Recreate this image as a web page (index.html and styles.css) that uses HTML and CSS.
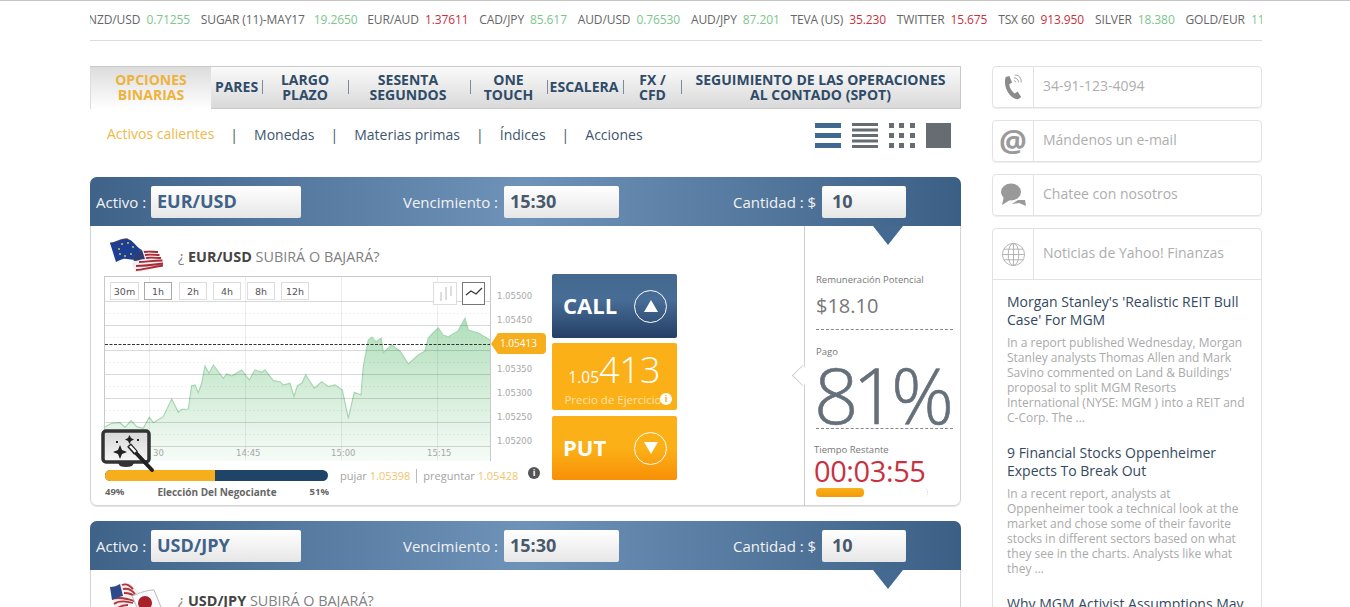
FILE: index.html
```html
<!DOCTYPE html>
<html lang="es">
<head>
<meta charset="utf-8">
<title>Opciones binarias</title>
<link rel="stylesheet" href="styles.css">
</head>
<body>
<div class="page">
  <div class="ticker">
    <div class="ticker-track">
      <span class="tick">NZD/USD <b class="up">0.71255</b></span>
      <span class="tick tick-wide">SUGAR (11)-MAY17 <b class="up">19.2650</b></span>
      <span class="tick">EUR/AUD <b class="down">1.37611</b></span>
      <span class="tick">CAD/JPY <b class="up">85.617</b></span>
      <span class="tick">AUD/USD <b class="up">0.76530</b></span>
      <span class="tick">AUD/JPY <b class="up">87.201</b></span>
      <span class="tick">TEVA (US) <b class="down">35.230</b></span>
      <span class="tick">TWITTER <b class="down">15.675</b></span>
      <span class="tick">TSX 60 <b class="down">913.950</b></span>
      <span class="tick">SILVER <b class="up">18.380</b></span>
      <span class="tick">GOLD/EUR <b class="up">1161.50</b></span>
    </div>
  </div>

  <div class="columns">
    <main class="main">
      <nav class="tabs">
        <a class="tab tab-active">OPCIONES<br>BINARIAS</a>
        <a class="tab tab-pares sep">PARES</a>
        <a class="tab tab-largo sep">LARGO<br>PLAZO</a>
        <a class="tab tab-sesenta sep">SESENTA<br>SEGUNDOS</a>
        <a class="tab tab-one sep">ONE<br>TOUCH</a>
        <a class="tab tab-esc sep">ESCALERA</a>
        <a class="tab tab-fx sep">FX /<br>CFD</a>
        <a class="tab tab-seg">SEGUIMIENTO DE LAS OPERACIONES<br>AL CONTADO (SPOT)</a>
      </nav>

      <div class="subnav">
        <a class="sub sub-active">Activos calientes</a><i class="bar">|</i>
        <a class="sub">Monedas</a><i class="bar">|</i>
        <a class="sub">Materias primas</a><i class="bar">|</i>
        <a class="sub">Índices</a><i class="bar">|</i>
        <a class="sub">Acciones</a>
        <div class="views">
          <svg class="view" viewBox="0 0 26 26"><path fill="#41688f" d="M0 1h26v5H0zM0 11h26v5H0zM0 21h26v5H0z"/></svg>
          <svg class="view" viewBox="0 0 26 26"><path fill="#666c72" d="M0 1h26v3H0zM0 6.500h26v3H0zM0 12h26v3H0zM0 17.500h26v3H0zM0 23h26v3H0z"/></svg>
          <svg class="view" viewBox="0 0 26 26"><path fill="#666c72" d="M0 1h5v5H0zM10 1h5v5h-5zM21 1h5v5h-5zM0 11h5v5H0zM10 11h5v5h-5zM21 11h5v5h-5zM0 21h5v5H0zM10 21h5v5h-5zM21 21h5v5h-5z"/></svg>
          <svg class="view" viewBox="0 0 26 26"><path fill="#666c72" d="M0 1h25v25H0z"/></svg>
        </div>
      </div>

      <section class="card">
        <header class="card-head">
          <label class="lbl lbl-asset">Activo :</label><span class="field field-asset">EUR/USD</span>
          <label class="lbl lbl-exp">Vencimiento :</label><span class="field field-exp">15:30</span>
          <label class="lbl lbl-amt">Cantidad : $</label><span class="field field-amt">10</span>
          <span class="notch"></span>
        </header>
        <div class="card-body">
          <div class="chart-col">
            <div class="question">
              <svg class="flag" viewBox="0 0 56 36">
                <path fill="#1d3f93" d="M2 7C8 7 13 2 20 3c5 1 8 8 14 11l-4 9c-6 2-11-1-15 0-3 1-5 2-7 3z"/>
                <g fill="#d9c34a"><circle cx="14" cy="8" r="1"/><circle cx="20" cy="7" r="1"/><circle cx="25" cy="11" r="1"/><circle cx="11" cy="13" r="1"/><circle cx="12" cy="18" r="1"/><circle cx="17" cy="20" r="1"/><circle cx="23" cy="18" r="1"/></g>
                <path fill="#f3eeee" d="M26 20c3-1 5-6 9-6 5-1 9 1 14 0l7 15c-5 2-9 3-15 5-5 1-9 2-14 2l-3-8c2-2 1-6 2-8z"/>
                <path fill="none" stroke="#a92d38" stroke-width="1.800" d="M36 16c5-1 9 0 14 0M37 19c5-1 10 0 14.500 0M38 22c5-1 10 0 15 0M31 26c6 0 11-1 23.500-1.500M28 30c5 0 16-1 27-2.500M28 34c5 0 16-3 27-4.500"/>
                <path fill="#2c3f73" d="M24 21c3-1 6-6 10-7l3 9c-4 0-7 2-11 2z"/>
                <path fill="none" stroke="#4b3a3a" stroke-width=".8" d="M2 7C8 7 13 2 20 3"/>
              </svg>
              <span class="q-text">¿ <b>EUR/USD</b> SUBIRÁ O BAJARÁ?</span>
            </div>
            <svg class="chart" viewBox="104 276 442 190">
              <defs>
                <linearGradient id="area" x1="0" y1="0" x2="0" y2="1">
                  <stop offset="0" stop-color="#b0dfba"/>
                  <stop offset="1" stop-color="#f6fbf7"/>
                </linearGradient>
              </defs>
              <rect x="104.500" y="276.500" width="386" height="184" fill="#fff" stroke="#c9c9c9"/>
              <path fill="url(#area)" d="M105 461V426.700L111.700 423.300 120 422.700 125 427.300 131 420.700 136.700 426.700 143.300 428.300 149.300 417.300 153.300 422.700 163.300 416.700 171.700 399 178.300 412.300 181.700 409.300 188.300 409 191.700 385.700 195 385 198.300 392.700 201.700 383.300 205 366 209 373.300 213.300 365 223.300 378.300 226.700 374 231.700 376 241.700 370 249.300 380 255 370 261.700 372.300 265 370 273.300 380.700 280 381.700 283.300 385 290 383.300 294 396.700 297.300 386 302 383 305.700 375 314.300 388.300 321.700 381.700 328.300 386.700 335 385 342.300 390 348.300 418.300 354.300 392.300 361 395 363.300 366.700 368.300 340 372 337 376 342 381 338 383.300 352.700 391.700 345 400 351 408.300 364 418.300 355 425 351 428.300 338 433 333 438.300 328 443 335 448.300 336.700 458 331 465 318.300 468.300 330 478.300 333 490 340V461Z"/>
              <path fill="none" stroke="#a6d6b1" stroke-width="1.200" d="M105 426.700L111.700 423.300 120 422.700 125 427.300 131 420.700 136.700 426.700 143.300 428.300 149.300 417.300 153.300 422.700 163.300 416.700 171.700 399 178.300 412.300 181.700 409.300 188.300 409 191.700 385.700 195 385 198.300 392.700 201.700 383.300 205 366 209 373.300 213.300 365 223.300 378.300 226.700 374 231.700 376 241.700 370 249.300 380 255 370 261.700 372.300 265 370 273.300 380.700 280 381.700 283.300 385 290 383.300 294 396.700 297.300 386 302 383 305.700 375 314.300 388.300 321.700 381.700 328.300 386.700 335 385 342.300 390 348.300 418.300 354.300 392.300 361 395 363.300 366.700 368.300 340 372 337 376 342 381 338 383.300 352.700 391.700 345 400 351 408.300 364 418.300 355 425 351 428.300 338 433 333 438.300 328 443 335 448.300 336.700 458 331 465 318.300 468.300 330 478.300 333 490 340"/>
              <path fill="none" stroke="#000" stroke-opacity=".15" d="M105 301.500h385M105 325.500h385M105 350.500h385M105 374.500h385M105 398.500h385M105 422.500h385M105 446.500h385"/>
              <path fill="none" stroke="#000" stroke-opacity=".05" stroke-dasharray="2 2" d="M105 313.500h385M105 337.500h385M105 362.500h385M105 386.500h385M105 410.500h385M105 434.500h385"/>
              <path fill="none" stroke="#000" stroke-opacity=".07" d="M149.500 277v183M245.500 277v183M341.500 277v183M437.500 277v183"/>
              <path fill="none" stroke="#333" stroke-dasharray="3 1.500" d="M105 344.500h385"/>
              <g class="axis">
                <text x="497" y="299">1.05500</text><text x="497" y="323">1.05450</text>
                <text x="497" y="372">1.05350</text><text x="497" y="396">1.05300</text>
                <text x="497" y="420">1.05250</text><text x="497" y="444">1.05200</text>
                <text x="153" y="456">30</text><text x="236" y="456">14:45</text>
                <text x="331" y="456">15:00</text><text x="427" y="456">15:15</text>
              </g>
              <path fill="#f7ae1d" d="M491 344l7-11h44q4 0 4 4v13q0 4-4 4h-44z"/>
              <text class="price-tag" x="500" y="347">1.05413</text>
              <g class="rng">
                <rect x="110.500" y="282.500" width="28" height="17"/><text x="124.500" y="295">30m</text>
                <rect class="rng-on" x="144.500" y="282.500" width="27" height="17"/><text x="158" y="295">1h</text>
                <rect x="179.500" y="282.500" width="27" height="17"/><text x="193" y="295">2h</text>
                <rect x="213.500" y="282.500" width="27" height="17"/><text x="227" y="295">4h</text>
                <rect x="247.500" y="282.500" width="27" height="17"/><text x="261" y="295">8h</text>
                <rect x="281.500" y="282.500" width="27" height="17"/><text x="295" y="295">12h</text>
              </g>
              <rect x="433.500" y="282.500" width="23" height="22" fill="#fff" stroke="#ddd"/>
              <path fill="none" stroke="#ddd" stroke-width="2" d="M441 292v9M446 287v13M451 286v10"/>
              <rect x="462.500" y="282.500" width="22" height="22" fill="#fff" stroke="#777"/>
              <path fill="none" stroke="#333" stroke-width="1.200" d="M466 295l5-4 5 3 6-6"/>
            </svg>
            <svg class="wand" viewBox="0 0 54 44">
              <defs>
                <linearGradient id="wandbg" x1="0" y1="0" x2="0" y2="1">
                  <stop offset="0" stop-color="#d6d6d6"/>
                  <stop offset="1" stop-color="#f7f7f7"/>
                </linearGradient>
              </defs>
              <rect x="2" y="2" width="46" height="31" rx="3" fill="url(#wandbg)" stroke="#333" stroke-width="3.500"/>
              <path fill="#333" d="M17 34h16l-2 3q-6 2-12 0z"/>
              <path fill="#222" d="M17 21l2-5 2 5 5 2-5 2-2 5-2-5-5-2zM27 9l1.500-3 1.500 3 3 1.500-3 1.500-1.500 3-1.500-3-3-1.500zM15 12h2v2h-2zM36 10h2v2h-2z"/>
              <path stroke="#222" stroke-width="4" stroke-linecap="round" d="M34 23l17 18"/>
              <path stroke="#222" stroke-width="5" d="M28 16l7 8"/>
              <path stroke="#fff" stroke-width="2.500" d="M29 17l5.500 6"/>
            </svg>
            <div class="sentiment">
              <div class="bar-wrap">
                <div class="meter"><span class="meter-fill"></span></div>
                <div class="meter-labels"><span>49%</span><span class="meter-title">Elección Del Negociante</span><span>51%</span></div>
              </div>
              <div class="quote">
                pujar <em>1.05398</em><i class="q-sep"></i>preguntar <em>1.05428</em>
                <span class="info">i</span>
              </div>
            </div>
          </div>

          <div class="actions">
            <button class="btn btn-call">CALL<span class="ring"><span class="tri-up"></span></span></button>
            <div class="strike">
              <div class="strike-num"><small>1.05</small>413</div>
              <div class="strike-lbl">Precio de Ejercicio<span class="info-w">i</span></div>
            </div>
            <button class="btn btn-put">PUT<span class="ring"><span class="tri-down"></span></span></button>
          </div>

          <aside class="stats">
            <span class="pointer"></span>
            <div class="st-lbl st-first">Remuneración Potencial</div>
            <div class="st-money">$18.10</div>
            <div class="st-lbl st-pago">Pago</div>
            <div class="st-pct">81%</div>
            <div class="st-lbl st-time">Tiempo Restante</div>
            <div class="st-clock">00:03:55</div>
            <div class="st-prog"><span></span></div>
          </aside>
        </div>
      </section>

      <section class="card">
        <header class="card-head">
          <label class="lbl lbl-asset">Activo :</label><span class="field field-asset">USD/JPY</span>
          <label class="lbl lbl-exp">Vencimiento :</label><span class="field field-exp">15:30</span>
          <label class="lbl lbl-amt">Cantidad : $</label><span class="field field-amt">10</span>
          <span class="notch"></span>
        </header>
        <div class="card-body">
          <div class="chart-col">
            <div class="question">
              <svg class="flag" viewBox="0 0 56 36">
                <path fill="#f3eeee" d="M2 7C8 7 13 2 20 3c5 1 8 8 14 11l-4 9c-6 2-11 3-15 5-3 2-5 5-7 6z"/>
                <path fill="none" stroke="#b3333d" stroke-width="1.800" d="M14 5c5-2 8 1 11 4M15 9c5-1 9 1 12 5M16 13c5 0 9 1 13 5M4 19c5-2 15-1 25 3M6 24c4-3 12-3 19-1M8 29c4-3 8-4 12-4"/>
                <path fill="#2c4a8b" d="M2 7c4 0 7-1 10-3l3 12c-4 1-8 2-11 4z"/>
                <path fill="#fbfbfb" stroke="#bbb" d="M24 16c8-3 14-6 22-6l9 22c-8 1-12 3-22 4z"/>
                <circle cx="37" cy="23" r="7" fill="#a8222e"/>
              </svg>
              <span class="q-text">¿ <b>USD/JPY</b> SUBIRÁ O BAJARÁ?</span>
            </div>
          </div>
        </div>
      </section>
    </main>

    <aside class="side">
      <div class="contact">
        <span class="c-icon">
          <svg viewBox="0 0 24 28" width="22" height="26"><path fill="#8b8b8b" d="M4 3l4-1 3 7-3 2c0 4 3 8 6 10l3-2 4 6-3 2c-3 1-7-1-10-5C4 17 2 10 4 3z"/><path fill="none" stroke="#999" d="M13 4c3 0 5 2 5 5M14 1c5 0 7 3 7 8M13 7c1 0 2 1 2 2"/></svg>
        </span>
        <span class="c-text">34-91-123-4094</span>
      </div>
      <div class="contact">
        <span class="c-icon c-at">@</span>
        <span class="c-text">Mándenos un e-mail</span>
      </div>
      <div class="contact">
        <span class="c-icon">
          <svg viewBox="0 0 26 24" width="26" height="24"><ellipse cx="11" cy="9" rx="10" ry="8.500" fill="#999"/><path fill="#999" d="M4 13l-2 9 8-5zM18 17h7l1 6-7-3-7 1z"/></svg>
        </span>
        <span class="c-text">Chatee con nosotros</span>
      </div>
      <div class="news">
        <div class="news-head">
          <span class="c-icon">
            <svg viewBox="0 0 26 26" width="25" height="25" fill="none" stroke="#aaa" stroke-width=".9"><circle cx="13" cy="13" r="11.500"/><ellipse cx="13" cy="13" rx="5.500" ry="11.500"/><path d="M13 1.500v23M1.500 13h23M3 7.500h20M3 18.500h20"/></svg>
          </span>
          <span class="c-text">Noticias de Yahoo! Finanzas</span>
        </div>
        <div class="news-body">
          <article class="story">
            <h3>Morgan Stanley's 'Realistic REIT Bull Case' For MGM</h3>
            <p>In a report published Wednesday, Morgan Stanley analysts Thomas Allen and Mark Savino commented on Land &amp; Buildings' proposal to split MGM Resorts International (NYSE: MGM ) into a REIT and C-Corp. The ...</p>
          </article>
          <article class="story">
            <h3>9 Financial Stocks Oppenheimer Expects To Break Out</h3>
            <p>In a recent report, analysts at Oppenheimer took a technical look at the market and chose some of their favorite stocks in different sectors based on what they see in the charts. Analysts like what they ...</p>
          </article>
          <article class="story">
            <h3>Why MGM Activist Assumptions May Be Off</h3>
          </article>
        </div>
      </div>
    </aside>
  </div>
</div>
</body>
</html>
```

FILE: styles.css
```css
* { box-sizing: border-box; }
html, body { margin: 0; height: 607px; overflow: hidden; background: #fff; }
body { font-family: "Open Sans", "Liberation Sans", sans-serif; color: #555; border-top: 1px solid #c4c4c4; }
.page { width: 1172px; margin-left: 90px; }

/* ticker */
.ticker { height: 40px; border-bottom: 1px solid #dcdcdc; overflow: hidden; }
.ticker-track { display: flex; gap: 10.800px; margin-left: -2px; padding-top: 10px; white-space: nowrap; font-size: 12px; line-height: 18px; color: #666; letter-spacing: -.1px; }
.tick b { font-weight: 400; margin-left: 3px; }
.tick-wide { margin-right: -1px; }
.tick-wide b { margin-left: 6px; }
.up { color: #7cc68d; }
.down { color: #c8323f; }

.columns { display: flex; margin-top: 25px; }
.main { width: 871px; flex: none; }
.side { width: 270px; margin-left: 31px; flex: none; }

/* tabs */
.tabs { display: flex; align-items: center; height: 43px; padding-bottom: 2px; border: 1px solid #c9c9c9; border-left: 0; background: linear-gradient(#fafafa, #d9d9d9); font-size: 14px; line-height: 15px; font-weight: 700; color: #2f4b68; text-align: center; }
.tab { display: block; flex: none; position: relative; }
.tab-active { align-self: flex-start; width: 121px; height: 42px; padding-top: 5px; color: #efb23c; background: linear-gradient(#dcdcdc, #fff); border-left: 1px solid #ddd; }
.sep::after { content: ""; position: absolute; top: 50%; right: 0; width: 1px; height: 14px; margin-top: -7px; background: #7d8a97; }
.tab-pares { width: 52px; padding-right: 1px; }
.tab-largo { width: 86px; padding-right: 2px; }
.tab-sesenta { width: 122px; padding-right: 4px; }
.tab-one { width: 77px; padding-right: 2px; }
.tab-esc { width: 76px; padding-right: 4px; }
.tab-fx { width: 58px; padding-right: 1px; }
.tab-seg { width: 277px; }

/* sub navigation */
.subnav { display: flex; align-items: center; height: 50px; padding-left: 17px; font-size: 14px; color: #3e566e; }
.sub-active { color: #f0b848; margin-top: -2px; }
.bar { font-style: normal; margin: 0 16px; color: #3e566e; }
.views { display: flex; gap: 11px; margin-left: auto; margin-right: 9px; margin-top: 2px; }
.view { width: 26px; height: 26px; display: block; }

/* card */
.card { border: 1px solid #d4d4d4; border-radius: 7px; height: 329px; margin-top: 15px; position: relative; box-shadow: 0 1px 1px #e4e4e4; }
.subnav + .card { margin-top: 18px; }
.card-head { display: flex; align-items: center; height: 49px; margin: -1px -1px 0; padding-left: 6px; border-radius: 7px 7px 0 0; background: linear-gradient(90deg, #3f6289, #6f93b8 50%, #3c5f86); color: #f2f2f2; font-size: 15px; position: relative; }
.field { display: block; height: 32px; line-height: 31px; padding-left: 6px; background: linear-gradient(#fff, #e6e6e6); border-radius: 2px; font-weight: 700; font-size: 18px; color: #3f6289; }
.lbl { flex: none; }
.lbl-asset { width: 55px; }
.field-asset { width: 150px; }
.lbl-exp { margin-left: 102px; width: 101px; }
.field-exp { width: 115px; color: #48596b; }
.lbl-amt { margin-left: 114px; width: 89px; }
.field-amt { width: 84px; padding-left: 10px; color: #48596b; }
.notch { position: absolute; left: 783px; top: 49px; width: 0; height: 0; border: 15px solid transparent; border-top: 19px solid #456a92; border-bottom: 0; }

.card-body { display: flex; position: relative; height: 280px; }
.chart-col { width: 461px; padding-left: 13px; position: relative; flex: none; }
.question { display: flex; align-items: center; height: 50px; }
.flag { width: 56px; height: 36px; flex: none; margin-left: 4px; margin-top: 5px; }
.q-text { margin-left: 14px; font-size: 14.400px; color: #808080; margin-top: 10px; }
.q-text b { color: #444; }
.chart { display: block; width: 442px; height: 190px; }
.axis { font-family: "DejaVu Sans", sans-serif; font-size: 8.500px; fill: #a8a8a8; }
.price-tag { font-family: "Open Sans", sans-serif; font-size: 10px; fill: #fff; }
.rng rect { fill: #fff; stroke: #ddd; }
.rng .rng-on { stroke: #aaa; }
.rng text { font-family: "DejaVu Sans", sans-serif; font-size: 9.500px; fill: #555; text-anchor: middle; }
.wand { position: absolute; left: 10px; top: 203px; width: 54px; height: 44px; }
.sentiment { display: flex; margin-top: 4px; margin-left: 1px; }
.bar-wrap { width: 224px; flex: none; }
.meter { height: 11px; margin-right: 1px; border-radius: 6px; background: #1f4468; overflow: hidden; }
.meter-fill { display: block; width: 110px; height: 100%; background: #f7ae1d; }
.meter-labels { display: flex; justify-content: space-between; margin-top: 5px; font-size: 9.500px; line-height: 12px; font-weight: 700; color: #666; }
.meter-title { font-size: 10px; }
.quote { margin-left: 11px; font-size: 11px; line-height: 11px; color: #a3a3a3; white-space: nowrap; position: relative; top: -1px; width: 206px; }
.quote em { font-style: normal; color: #f3c46d; }
.q-sep { display: inline-block; width: 1px; height: 14px; background: #bbb; margin: 0 6px; vertical-align: -3px; }
.info { position: absolute; right: 6px; top: -2px; width: 12px; height: 12px; border-radius: 50%; background: #555; color: #fff; font-size: 9px; line-height: 12px; text-align: center; font-weight: 700; }

/* action buttons */
.actions { width: 125px; padding-top: 48px; flex: none; display: flex; flex-direction: column; gap: 5px; }
.btn { display: flex; align-items: center; justify-content: space-between; width: 125px; height: 64px; padding: 0 10px 2px 11px; border: 0; border-radius: 2px; font-family: inherit; font-size: 22px; font-weight: 700; color: #fff; }
.btn-call { background: linear-gradient(#44688f, #476d96 40%, #253f66); }
.btn-put { background: linear-gradient(#fbb017, #fbb017 50%, #f88f06); }
.ring { display: flex; align-items: center; justify-content: center; width: 33px; height: 33px; margin-top: 2px; border: 1.500px solid #fff; border-radius: 50%; }
.tri-up { width: 0; height: 0; border: 7px solid transparent; border-top: 0; border-bottom: 12px solid #fff; }
.tri-down { width: 0; height: 0; border: 7px solid transparent; border-bottom: 0; border-top: 12px solid #fff; }
.strike { height: 67px; border-radius: 2px; background: #fbb017; text-align: center; color: #fff; position: relative; margin-bottom: 1px; }
.strike-num { font-size: 36px; line-height: 36px; padding-top: 9px; font-weight: 300; }
.strike-num small { font-size: 15.500px; font-weight: 400; }
.strike-lbl { font-size: 11.500px; line-height: 14px; color: #fde3ac; white-space: nowrap; margin-top: -2px; margin-left: -3px; }
.info-w { position: absolute; right: 5px; bottom: 5px; width: 12px; height: 12px; border-radius: 50%; background: #fff; color: #f7ae1d; font-size: 9px; line-height: 12px; font-weight: 700; }

/* stats panel */
.stats { position: relative; width: 157px; margin-left: 127px; border-left: 1px solid #cfcfcf; flex: none; padding-left: 11px; height: 280px; }
.pointer { position: absolute; left: -13px; top: 139px; width: 14px; height: 20px; }
.pointer::before { content: ""; position: absolute; left: 3px; top: 3px; width: 14px; height: 14px; background: #fff; border-left: 1px solid #cfcfcf; border-bottom: 1px solid #cfcfcf; transform: rotate(45deg); }
.st-lbl { font-size: 9.500px; line-height: 12px; color: #777; }
.st-first { padding-top: 48px; }
.st-money { margin-top: 6px; width: 137px; height: 24px; font-size: 20px; line-height: 28px; color: #777; }
.st-pago { width: 137px; margin-top: 13px; padding-top: 16px; border-top: 1px dashed #888; }
.st-pct { width: 137px; margin-top: 4px; height: 67px; font-size: 78px; line-height: 64px; letter-spacing: -6px; font-weight: 300; color: #66707a; -webkit-text-stroke: .6px #66707a; border-bottom: 1px dashed #888; white-space: nowrap; text-indent: -2px; }
.st-time { margin-left: -2px; margin-top: 15px; }
.st-clock { margin-left: -2px; margin-top: -1px; font-size: 29px; line-height: 32px; color: #c8323f; letter-spacing: -.4px; }
.st-prog { width: 112px; height: 9px; margin-top: 1px; border-right: 1px dotted #ccc; border-radius: 5px; }
.st-prog span { display: block; width: 48px; height: 100%; border-radius: 4px; background: linear-gradient(#f9b11c, #f29a05); }

/* sidebar */
.contact { display: flex; align-items: center; height: 42px; margin-bottom: 12px; border: 1px solid #e2e2e2; border-radius: 4px; box-shadow: 0 1px 1px #eee; }
.c-icon { display: flex; align-items: center; justify-content: center; width: 41px; height: 100%; flex: none; border-right: 1px solid #e2e2e2; }
.c-at { font-size: 31px; font-weight: 700; color: #9a9a9a; padding-bottom: 2px; }
.c-text { padding-left: 9px; padding-bottom: 4px; font-size: 14px; color: #aeaeae; white-space: nowrap; }
.news { border: 1px solid #e2e2e2; border-radius: 4px 4px 0 0; }
.news-head { display: flex; align-items: center; height: 51px; border-bottom: 1px solid #e2e2e2; }
.news-body { padding: 13px 14px 0; }
.story { margin-bottom: 19px; }
.story h3 { margin: 0; font-size: 14px; line-height: 18px; font-weight: 400; color: #34495f; }
.story p { margin: 6px 0 0; font-size: 12px; line-height: 15px; color: #aaa; }
```
